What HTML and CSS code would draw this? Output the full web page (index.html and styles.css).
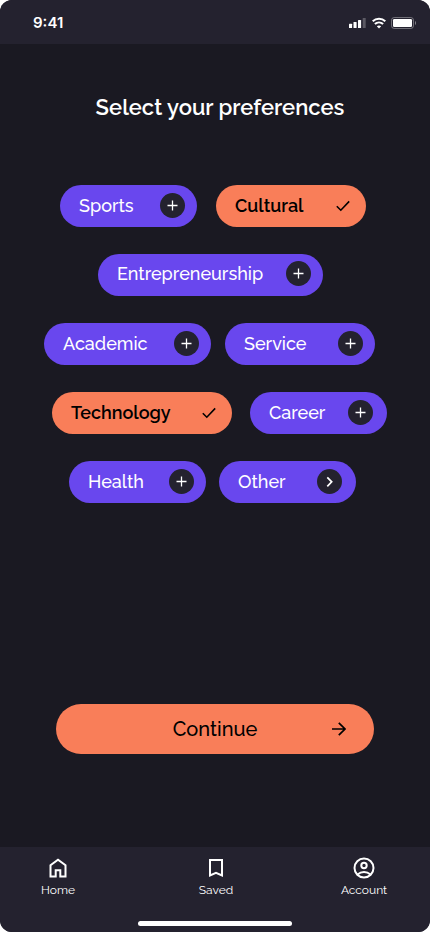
FILE: index.html
```html
<!DOCTYPE html>
<html lang="en">
<head>
<meta charset="utf-8">
<meta name="viewport" content="width=device-width, initial-scale=1">
<title>Select your preferences</title>
<link rel="stylesheet" href="styles.css">
</head>
<body>
<svg class="sprite" aria-hidden="true">
  <symbol id="plus" viewBox="0 0 25 25"><path d="M12.5 7.5v10M7.5 12.5h10" fill="none" stroke="currentColor" stroke-width="1.3"/></symbol>
  <symbol id="chevron" viewBox="0 0 25 25"><path d="M10.3 8.3l4.4 4.5-4.4 4.5" fill="none" stroke="currentColor" stroke-width="1.7"/></symbol>
  <symbol id="check" viewBox="0 0 14 12"><path d="M.8 6.2l4 4L13.2 1.4" fill="none" stroke="currentColor" stroke-width="1.6"/></symbol>
</svg>
<div class="screen">
  <header class="status">
    <span class="time">9:41</span>
    <span class="indicators">
      <svg width="18" height="12" viewBox="0 0 18 12" fill="#fff" aria-label="Signal"><rect x="0" y="6.7" width="3.1" height="4.3" rx=".6"/><rect x="4.5" y="5" width="3.1" height="6" rx=".6"/><rect x="9" y="3" width="3.1" height="8" rx=".6"/><rect x="13.7" y="1" width="3" height="10" rx=".6" opacity=".25"/></svg>
      <svg width="14" height="12" viewBox="0 0 14 12" fill="none" stroke="#fff" stroke-width="2.1" aria-label="Wi-Fi"><path d="M.7 4.2C4.2.9 9.8.9 13.3 4.2M2.900 7c2.300-2.100 5.900-2.100 8.200 0"/><path d="M7 11.400L4.800 9.300c1.300-1.100 3.100-1.100 4.400 0z" fill="#fff" stroke="none"/></svg>
      <svg width="25" height="12" viewBox="0 0 25 12" aria-label="Battery"><rect x=".5" y=".5" width="22" height="11" rx="2.7" fill="none" stroke="#fff" stroke-opacity=".35"/><rect x="2" y="2" width="19" height="8" rx="1.3" fill="#fff"/><path d="M24 4v4c.9-.4 1.2-1.1 1.2-2S24.900 4.400 24 4z" fill="#fff" opacity=".4"/></svg>
    </span>
  </header>
  <main class="content">
    <h1>Select your preferences</h1>
    <div class="chips" role="group" aria-label="Preferences">
      <div class="row row-1">
        <button class="chip" type="button" aria-pressed="false">Sports<svg class="badge"><use href="#plus"/></svg></button>
        <button class="chip medium selected" type="button" aria-pressed="true">Cultural<svg class="check"><use href="#check"/></svg></button>
      </div>
      <div class="row row-2">
        <button class="chip widest" type="button" aria-pressed="false">Entrepreneurship<svg class="badge"><use href="#plus"/></svg></button>
      </div>
      <div class="row row-3">
        <button class="chip large" type="button" aria-pressed="false">Academic<svg class="badge"><use href="#plus"/></svg></button>
        <button class="chip medium" type="button" aria-pressed="false">Service<svg class="badge"><use href="#plus"/></svg></button>
      </div>
      <div class="row row-4">
        <button class="chip wide selected" type="button" aria-pressed="true">Technology<svg class="check"><use href="#check"/></svg></button>
        <button class="chip inset" type="button" aria-pressed="false">Career<svg class="badge"><use href="#plus"/></svg></button>
      </div>
      <div class="row row-5">
        <button class="chip" type="button" aria-pressed="false">Health<svg class="badge"><use href="#plus"/></svg></button>
        <button class="chip inset" type="button">Other<svg class="badge"><use href="#chevron"/></svg></button>
      </div>
    </div>
    <button class="continue" type="button"><span>Continue</span>
      <svg width="14" height="14" viewBox="0 0 14 14" fill="none" stroke="currentColor" stroke-width="1.7" aria-hidden="true"><path d="M0 7h13M6.800 .8L13 7l-6.200 6.200"/></svg>
    </button>
  </main>
  <footer class="dock">
    <nav class="tabs" aria-label="Main">
      <a href="#home"><svg width="24" height="24" viewBox="0 0 24 24" fill="none" stroke="currentColor" stroke-width="2" aria-hidden="true"><path d="M4.500 20.500V9.300L12 3.700l7.500 5.600v11.200h-5.200v-6.200H9.700v6.200z"/></svg>Home</a>
      <a href="#saved"><svg width="24" height="24" viewBox="0 0 24 24" fill="none" stroke="currentColor" stroke-width="2" aria-hidden="true"><path d="M6 4h12v15.500l-6-2.600-6 2.600z"/></svg>Saved</a>
      <a href="#account"><svg width="24" height="24" viewBox="0 0 24 24" fill="none" stroke="currentColor" stroke-width="2" aria-hidden="true"><circle cx="12" cy="12" r="9.500"/><circle cx="12" cy="9.500" r="2.700"/><path d="M5.500 18.500c3.800-3.300 9.200-3.300 13 0"/></svg>Account</a>
    </nav>
    <div class="home-indicator"></div>
  </footer>
</div>
</body>
</html>
```
FILE: styles.css
```css
* { box-sizing: border-box; }

body {
  margin: 0;
  background: #fff;
  font-family: Raleway, Lato, sans-serif;
  font-weight: 500;
  color: #fff;
}

button { border: 0; font: inherit; cursor: pointer; }
svg { display: block; flex: none; }

.sprite { display: none; }

.screen {
  display: flex;
  flex-direction: column;
  min-height: 100vh;
  border-radius: 12px;
  overflow: hidden;
  background: #1a1922;
}

.status {
  display: flex;
  align-items: center;
  justify-content: space-between;
  height: 44px;
  padding: 2px 14px 0 33px;
  background: #24222f;
}

.time { font: 600 15px/20px Inter, sans-serif; }
.indicators { display: flex; align-items: center; gap: 5px; }

.content {
  flex: 1;
  display: flex;
  flex-direction: column;
  padding: 48px 0 93px;
}

h1 {
  margin: 0;
  padding-left: 10px;
  font-size: 22px;
  line-height: 30px;
  font-weight: 600;
  text-align: center;
}

.chips {
  display: flex;
  flex-direction: column;
  gap: 27px;
  margin-top: 63px;
}

.row { display: flex; justify-content: center; }
.row-1 { gap: 19px; padding-right: 4px; }
.row-2 { padding-right: 9px; }
.row-3 { gap: 14px; padding-right: 11px; }
.row-4 { gap: 18px; padding-left: 9px; }
.row-5 { gap: 13px; padding-right: 5px; }

.chip {
  display: flex;
  align-items: center;
  justify-content: space-between;
  width: 137px;
  height: 42px;
  padding: 0 12px 1px 19px;
  border-radius: 21px;
  background: #6947ee;
  color: #fff;
  font-size: 18px;
  line-height: 24px;
}

.medium { width: 150px; }
.large { width: 167px; }
.wide { width: 180px; }
.widest { width: 225px; padding-bottom: 3px; }
.inset { padding-right: 14px; }

.selected {
  padding-right: 16px;
  background: #f97e59;
  color: #000;
  font-weight: 600;
}

.badge {
  width: 25px;
  height: 25px;
  border-radius: 50%;
  background: #24222f;
}

.check { width: 14px; height: 12px; }

.continue {
  display: grid;
  grid-template-columns: 1fr auto 1fr;
  align-items: center;
  height: 50px;
  margin: auto 56px 0;
  padding: 0 28px;
  border-radius: 25px;
  background: #f97e59;
  color: #000;
  font-size: 20px;
  line-height: 26px;
}

.continue span { grid-column: 2; }
.continue svg { justify-self: end; }

.dock {
  padding: 9px 0 6px;
  background: #24222f;
}

.tabs {
  display: grid;
  grid-template-columns: 29fr 50fr 24fr;
  padding-right: 18px;
}

.tabs a {
  display: flex;
  flex-direction: column;
  align-items: center;
  gap: 2px;
  color: #fff;
  font-size: 12px;
  font-weight: 400;
  line-height: 16px;
  text-decoration: none;
}

.home-indicator {
  width: 36%;
  height: 5px;
  margin: 23px auto 0;
  border-radius: 3px;
  background: #fff;
}
```
